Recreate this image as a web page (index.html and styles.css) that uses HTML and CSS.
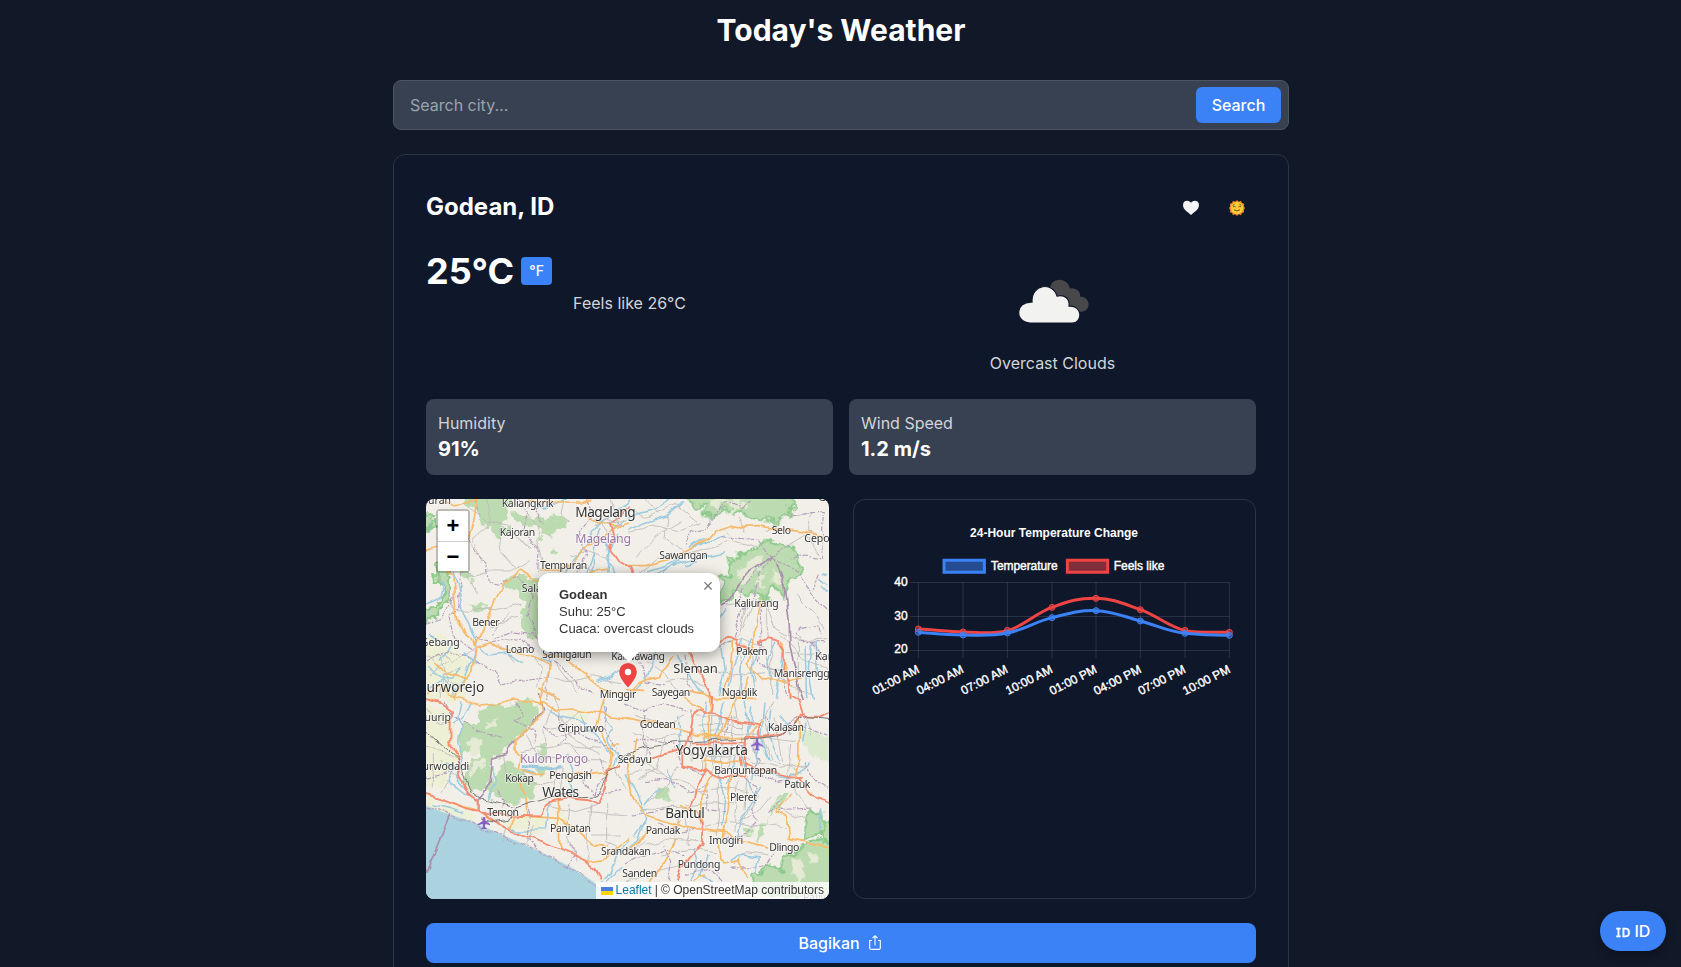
FILE: index.html
```html
<!DOCTYPE html>
<html lang="en">
<head>
<meta charset="utf-8">
<title>Today's Weather</title>
<link rel="stylesheet" href="styles.css">
</head>
<body>
<main class="page">
  <h1 class="title">Today's Weather</h1>
  <form class="search">
    <input class="search-input" type="text" placeholder="Search city...">
    <button class="search-btn" type="button">Search</button>
  </form>
  <section class="card">
    <header class="card-head">
      <h2 class="city">Godean, ID</h2>
      <div class="actions">
        <svg width="16" height="16" viewBox="0 0 16 16"><path d="M8 15C5 12 0 9.500 0 5.200C0 2 2 .8 4 .8C6 .8 7.500 1.800 8 3C8.500 1.800 10 .8 12 .8C14 .8 16 2 16 5.200C16 9.500 11 12 8 15Z" fill="#f4f2f4"/><path d="M9 3.500C11 1 14.500 2 14 5C13.500 7 10 7 9 3.500" fill="#fff"/></svg>
        <svg width="16" height="16" viewBox="0 0 16 16"><path d="M8 0l1.700 1.700 2.300-.9.900 2.300 2.400.7-.5 2.400L16 8l-1.200 1.900.4 2.300-2.300.7-.9 2.300-2.300-.9L8 16l-1.700-1.700-2.300.9-.9-2.300-2.300-.7.4-2.300L0 8l1.200-1.800-.4-2.400 2.300-.7L4 .8l2.300.9Z" fill="#f7842b"/><circle cx="8" cy="8" r="6.200" fill="#fccb35"/><path d="M3.700 5.300l1.800-1M12.300 5.300l-1.800-1M4 6.900q1.300-1 2.600 0M9.400 6.900q1.300-1 2.600 0M5 9.800q3 2.300 6 0" fill="none" stroke="#5d4523" stroke-width=".9"/></svg>
      </div>
    </header>
    <div class="now">
      <div class="now-col">
        <div class="temp-row"><span class="temp">25°C</span><button class="unit" type="button">°F</button></div>
        <p class="feels">Feels like 26°C</p>
      </div>
      <div class="now-col sky">
        <svg width="100" height="100" viewBox="0 0 100 100">
          <g transform="translate(0 1.500)">
          <path d="M47 38C46 25 64 23 67 36C73 35 78 39 77 44C84 44 87 50 85 55C83 59 79 60 75 59L55 44Z" fill="#48484a"/>
          <path d="M27 70C11 69 12 48 29 49C28 31 50 28 54 43C62 41 67 46 66 53C80 52 80 70 69 70Z" fill="#f2f2f0" stroke="#10182a" stroke-width="1.200" transform="translate(0 .6)"/>
          </g>
        </svg>
        <p class="desc">Overcast Clouds</p>
      </div>
    </div>
    <div class="stats">
      <div class="stat"><p class="stat-name">Humidity</p><p class="stat-value">91%</p></div>
      <div class="stat"><p class="stat-name">Wind Speed</p><p class="stat-value">1.2 m/s</p></div>
    </div>
    <div class="panels">
      <div class="map">
        <svg class="tiles" width="403" height="400" viewBox="0 0 403 400">
          <defs>
            <filter id="terrain" x="-5%" y="-5%" width="110%" height="110%"><feTurbulence type="fractalNoise" baseFrequency=".09" numOctaves="3" seed="4"/><feDisplacementMap in="SourceGraphic" scale="15" xChannelSelector="R" yChannelSelector="G"/></filter>
            <filter id="bends" x="-5%" y="-5%" width="110%" height="110%"><feTurbulence type="fractalNoise" baseFrequency=".05" numOctaves="2" seed="9"/><feDisplacementMap in="SourceGraphic" scale="9" xChannelSelector="R" yChannelSelector="G"/></filter>
          </defs>
          <rect width="403" height="400" fill="#f2efe9"/>
          <g filter="url(#terrain)">
          <g transform="translate(-6 -4) scale(.33333)">
            <path class="farm" d="M18 430L60 420 120 470 150 520 130 615H18Z"/>
            <path class="wood" d="M150 0H280L270 60 240 90 268 98 250 135 222 138 215 100 180 85 165 50 140 20ZM280 50L330 70 400 66 450 84 445 108 410 100 402 122 370 118 350 90 300 84 280 66ZM360 120l14 4 2 22-16-8ZM390 150l22 12-4 14-18-12ZM118 232l26-10 22 24-20 8-18-6ZM148 258l16-4-4 20ZM155 330l30-2 4 18-30 2ZM245 265L300 233 356 260 356 300 330 310 270 285ZM300 300L356 300V430L330 425 305 405 310 340Z"/>
            <path class="wood edge" d="M0 60L40 64 46 90 18 110H0ZM42 200L60 194 78 214 76 236 96 250 88 310 60 340 60 370 0 385V345L46 335 68 310 72 270 48 250Z"/>
          </g>
          <g transform="translate(199 -4) scale(.33333)">
            <path class="wood edge" d="M165 0L215 36 240 30 236 68 270 62 285 45 320 40 340 48 380 60 400 74 440 76 500 66V0Z"/>
            <path class="wood edge" d="M310 185L350 182 380 160 440 138 460 150 500 150 514 178 526 200 520 250 490 260 486 308 440 270 430 285 430 315 390 305 340 290 330 295 288 325V250L320 235Z"/>
            <path class="sparse" d="M330 260L370 200 420 175 395 220 360 260ZM390 270l30-50-3 55ZM445 230l20 15 10 20-30-5ZM320 20l30 5 20 15-50 5Z"/>
            <path class="sparse" d="M240 12L260 40 290 30 340 20 350 12Z"/>
          </g>
          <g transform="translate(-6 196) scale(.33333)">
            <path class="farm" d="M0 20L90 40 110 180 70 270 0 280ZM0 305L170 360 155 380 0 330ZM265 370L370 370 380 400 340 430 265 395ZM410 350L450 370 440 400 400 380ZM440 60L500 40 490 90Z"/>
            <path class="wood" d="M175 50L230 30 290 20 330 10 358 30 350 62 330 100 300 115 280 150 260 155 235 180 215 185 205 260 185 300 160 290 125 260 128 230 160 200 180 190 170 160 150 150 125 190 115 120 150 85 180 80ZM355 150h22v38h-22ZM240 210L260 200 300 215 345 270 340 300 300 315 270 325 230 300ZM200 265l30-10 20 50-35 5-20-15ZM350 215l30-5 10 20-25 10Z"/>
            <path class="sparse" d="M140 140L180 120 190 150 160 190 150 170ZM140 230l40-30 20 10-50 40ZM200 90l30-20 4 14-30 16Z"/>
          </g>
          <g transform="translate(199 196) scale(.33333)">
            <path class="wood" d="M95 275L130 285 135 315 95 312 85 290ZM350 405l20-5 6 14-20 4ZM470 300L490 300 460 340 430 360 410 430 395 450 390 420 420 380 440 340Z"/>
            <path class="sparse2" d="M520 90L570 110 640 130V210L570 190 530 150Z"/>
            <path class="wood edge" d="M545 355L590 350V420L545 425ZM530 450L590 430 640 445V600H400L380 545 420 530 440 510 470 530 470 490 510 480ZM590 380h50v60h-50Z"/>
            <path class="sparse" d="M500 490l35 15 5 50-30 10ZM550 470l20 10-10 30Z"/>
          </g>
          </g>
          <path class="water" transform="translate(-6 196) scale(.33333)" d="M0 326L90 358 150 378 260 425 350 465 450 515 520 560 560 600 630 615V630H0Z"/>
          <g filter="url(#bends)">
          <!-- north-west -->
          <g transform="translate(-6 -4) scale(.33333)">
            <path class="minor" d="M150 40L200 80 260 90 300 130 340 160M200 12L210 80 160 130 180 200M120 230L170 240 220 225 290 225 330 200M230 100L240 170 290 225M330 12L320 60 360 90 350 140 370 200M430 12L420 60 450 80M60 240L100 330 150 350 220 330M200 330L250 345 310 330M170 300L140 240M220 420L240 380 300 370M290 460L340 420 360 430M18 500L70 480 100 500 160 455M30 540L90 500M60 615L70 540 130 520M60 480L90 560 140 590M330 480L360 520 350 580M380 540L440 560 520 545 600 560M400 500L470 590M450 180L500 170 560 190M470 200L520 230M500 20L540 60 560 120 610 140M20 480L60 530M240 450L280 500M270 360L210 400"/>
            <path class="stream" d="M340 20L370 40 400 30 440 12M430 235L460 190 500 150 520 110 560 70 600 40 630 12M560 235L570 170 560 130M540 100L520 160 520 235M500 235L520 180M590 120L560 190 580 235M610 80L560 120M18 330L60 310 72 260M96 232L110 270 130 350 165 440 160 480 130 560 100 600M170 450L210 480 260 475 310 505M18 520L60 545 100 550 130 520M18 580L70 550 110 590M125 470L165 500M95 440L60 500M535 560L580 540 610 520M360 490L390 500 385 540M30 420L80 450"/>
            <path class="border" d="M145 130L175 185 200 205 208 262 240 268 290 245 340 300 320 360 356 430M125 235L110 300 120 330 90 360 105 430 165 470M18 395L60 375 100 300M290 12L320 60 310 110 360 170 356 230M380 12L350 45 370 80M165 430L220 440 300 430 350 460M165 500L220 530 240 570 300 560 385 545M400 500L430 520 470 570 520 600M500 12L520 60 480 120 500 180 460 235M18 500L80 470 150 485M160 12L180 60M230 430L270 410 345 420M390 470L380 615"/>
            <path class="second" d="M60 12L100 30 140 24 180 12M170 12L165 60 148 130M18 170L50 160M76 232L96 240 100 300 110 370 165 455 215 440 250 465 300 470 350 490 390 510 380 550 360 615M165 455L155 530 120 580 100 615M155 450L180 425 200 380 220 330 250 270 300 228 360 260M300 30L330 18 410 24 480 24 520 12M360 225L420 225 460 200 500 150 550 125 590 100 630 90M470 50L540 80 590 100M40 510L80 535 140 550M370 480L430 485 470 520 540 575 620 600M510 235L560 225M18 600L60 570 90 595M356 585L420 615"/>
            <path class="trunk" d="M630 30L600 60 570 90 580 130 570 155 600 200 630 218"/>
            <path class="minor" d="M540 40L590 60M550 70L610 100M560 90L620 80M570 12L590 90M530 90L590 50"/>
          </g>
          <!-- north-east -->
          <g transform="translate(199 -4) scale(.33333)">
            <path class="minor" d="M10 30L60 70 160 30 220 80M30 190L100 120 170 80M130 60L120 130 180 180M60 12L100 60M10 120L80 90 160 110 230 80M40 235L100 190 170 180 260 160 310 140M360 110L340 60M420 110L480 60 560 50 550 110 600 130M490 150L540 120 580 180M300 100L330 140 400 160M290 450L350 430 420 460M300 330L380 320 350 400M420 320L450 400 520 440 610 430M420 320L430 430M470 420L540 500 610 520M330 430L350 520 330 615M380 450L390 560M250 520L320 540 420 530M420 480L450 540 560 600M120 560L200 550 260 590M510 300L560 350 600 400M60 500L120 530 160 600M360 340L340 420 310 440M480 480L570 470M440 430V600M520 440V615"/>
            <path class="stream" d="M10 110L60 85 130 65 180 18M140 12L90 45 10 70M185 160L240 130M190 165L235 145M200 158L300 120M60 230L120 215 170 190M90 235L180 200 300 170M110 235L160 200M180 210L215 200M300 340L280 370M350 430L320 520 310 580M380 430L350 500 340 615M450 440L430 490 440 560M470 460L460 560 450 615M560 440L550 520 565 615M570 440L578 540M590 235l15 8M580 250l25 20M585 270l20 22M400 470L380 530 390 600M160 480L180 520 240 600M90 470L60 550 20 590M540 450L545 610M290 450L300 520 280 600"/>
            <path class="border" d="M380 18L350 40 300 20 270 70 240 100 200 110 180 150M500 60L560 50 595 50 590 190 540 180 500 190M290 125L400 135 440 190 480 210 520 240 560 300 610 345M440 190L400 250 380 320 350 350 320 440 290 450M440 190L500 150M430 190L360 270 340 330M580 235L560 290M530 395L510 420 530 440 600 440M400 320L410 450 400 500 470 530 490 600M530 400L580 390 590 420M180 480L190 560 220 600M40 480L60 560 120 570M560 440L600 500"/>
            <path class="purple" d="M285 330L320 310 360 240 440 190 460 215 480 270 492 370 495 460 530 600 535 615"/>
            <path class="second" d="M0 212L60 212 140 192 200 160 250 130 270 105 320 88 355 94 400 92 440 100 530 110 590 124M405 310L390 380 385 450 370 510 410 550 490 560 530 545M320 430L312 540 290 600M350 450L390 470M370 545L345 610M150 480L100 545 40 560 10 590M0 578L60 580M200 590L280 610 400 610M470 440L475 500 490 560"/>
            <path class="trunk" d="M0 212L15 215 24 240M190 470L230 540 255 585 260 615M290 440L305 425 335 435 332 470M332 450L375 460M405 455L405 440 432 430 462 438 465 460 474 470 472 520 497 560 500 615"/>
          </g>
          <!-- south-west -->
          <g transform="translate(-6 196) scale(.33333)">
            <path class="stream wide" d="M305 212L350 215 380 220 425 212M310 225L340 235"/>
            <path class="stream" d="M120 20L110 60 130 100 110 140 125 200 115 260 150 300 170 320M80 210L110 220 90 260 140 300M30 330L90 340 130 355M222 210L222 270 205 315M265 395L290 405 380 404 385 340 395 320M480 60L500 100 550 150 580 180M550 20L560 80 580 100 560 130 590 180 575 210M630 440L590 480 570 540 530 565M150 20L130 60 100 90M440 180L460 230 450 270 470 300M380 40L420 60 500 90M600 520L560 560"/>
            <path class="minor" d="M18 40L60 90 90 80M18 160L70 170 110 190M40 180V280M60 290L100 240M380 100L430 90 480 40M400 30L370 100 380 150M320 120L350 180 420 190M450 150L500 200 560 200M300 170L420 150 540 160M510 330L500 450 505 500M450 330L440 430 470 500M340 390L320 450M260 400L250 440M380 330L470 350 530 330M250 180L260 240 290 260M410 210L400 290M430 210L420 300M560 330L560 440 600 460M520 420L600 420M500 350L620 360M580 210L620 290M400 0L450 120 540 180M60 200L130 260M310 240L370 270 400 260"/>
            <path class="border" d="M70 20L90 60 130 80 200 120 240 130M290 20L310 60 280 80 350 110 345 150M370 90L410 120 470 110 520 140 580 160M420 60L440 130 410 150M540 195L560 240 530 270 520 310M320 320L330 370 320 430 350 465M440 515L460 480 440 440M18 250L60 240 100 230M510 220L490 260 520 300 600 290M230 290L250 320 240 340M18 334L90 360 150 380 260 428 350 468 450 518 530 570M560 40L550 100 590 160"/>
            <path class="purple" d="M90 357L18 530M355 0L368 45 330 105 280 140 260 178 218 190 210 265 190 300 174 318 172 345"/>
            <path class="second" d="M85 0L140 15 180 30 230 25 290 12 360 28 370 20 410 45 460 42 520 52 630 72M360 12L365 60 330 105 285 135 285 165 300 185 295 220 330 235 375 235M300 260L318 300 320 360M18 300L90 325 170 350M270 400L285 362 420 370 445 385 520 450 570 455M415 310L420 465M555 0L530 100 575 170 565 230 500 235 440 230M500 498L560 490 630 430M480 235L440 260M577 150L600 150"/>
            <path class="trunk" d="M18 12L60 25 90 45 88 150 115 190 122 250 145 300 172 320 174 350M0 292L80 320 150 348 174 350 230 385 290 412 420 465 500 498 525 520 542 550M174 350L200 360 362 364 372 335 400 315 440 308 500 315 532 330 555 280 562 220 600 212"/>
            <path class="rail" d="M0 90L112 190 150 290 180 312 285 338 380 310 430 295 490 308 530 305 545 280 565 225 590 210 610 180 630 176M180 372L225 382 265 376 285 340"/>
          </g>
          <!-- south-east -->
          <g transform="translate(199 196) scale(.33333)">
            <path class="minor" d="M200 40L195 200M210 60L340 70M215 90L350 95M220 110L410 115M260 60V200M290 60V230M320 60L310 220M350 80V220M200 180L380 190M230 140V230M270 130L260 240M390 90V170M240 190L370 150M410 120L440 200 530 230M420 60L430 130 510 140M450 60L470 200M380 200L460 220 540 210M30 60L110 90 180 60M20 110L90 130 170 120M60 130L60 200 120 240M120 130L100 220 40 260M160 210L130 270 60 330M0 240L80 230 180 260 240 300M180 330L270 320 330 330M180 290L300 280 370 290M240 400L320 380 400 400M280 240V460M340 260L330 410M370 240L360 340M400 300L350 380M440 300L400 350 340 380M60 340L110 340 220 340M160 350L150 450M180 370L190 450M60 450L140 430 220 440M20 480L60 440M0 560L90 530 200 510M110 480L190 460 270 470M250 500L280 540M330 510L360 470 430 480M500 270L550 350M460 340L510 370 545 365M380 400L450 390 480 400M330 20L340 80M440 20L420 70 400 80M500 150L490 250M540 60L560 120"/>
            <path class="stream" d="M60 330L90 290 110 280M70 340L45 345M0 240L40 300 65 370 40 440 0 480M300 20L280 100 270 200M240 20L230 80 240 150M360 20L370 100 350 180 360 240M380 40L370 130M420 20L410 130 430 200M440 40L430 120 460 200M280 240L300 300 290 400M370 250L390 300 350 370 340 420 300 440M320 500L350 480 400 485 390 540M590 340L580 400M200 460L220 520 200 560M130 220L150 280M410 270L380 320M160 60L170 180M540 80L530 140M470 60L490 120M250 480L230 540 260 560M400 120L400 200 385 250M60 380L30 430M330 190L310 270M430 240L490 250 560 200"/>
            <path class="border" d="M0 30L60 50 120 30 190 50M20 140L80 130 150 150 170 210 240 240M60 260L130 250 190 290 240 270 250 340 300 350M360 250L400 270 380 340 400 380 360 420 300 430M390 160L410 200 380 230 450 260 500 250M20 360L80 350 150 340M100 380L160 420 230 400M0 510L60 480 130 460 180 480M180 540L250 520 290 560M520 90L610 120M540 200L580 260 610 280M430 350L470 310M460 350L560 345M60 60L50 140 80 190M310 70L300 130 370 170M130 560L140 500 120 450M320 520L420 510 450 480M420 60L450 100 520 70"/>
            <path class="second" d="M0 68L90 85 200 115 280 128M255 0L252 60 255 160M340 0L300 90 280 140M230 128H420M240 190L238 235M235 195L370 208M410 80L365 130M30 130L10 240 20 300 65 360 110 375 180 400 300 415 350 440 430 460M0 480L40 450 75 400M160 430L120 500 75 560M260 245L230 300 232 400M320 245L310 340 295 430M280 440L285 490 300 510 340 500 370 550M165 335L220 345M520 70L518 210 510 245M500 290L490 310 450 350 485 365 490 430 540 440 612 455M140 400L165 380M170 0L240 50M240 540L210 560"/>
            <path class="trunk" d="M80 187L170 165M262 0L258 50M215 40L300 68 310 75 405 88 406 126H360V145H200M215 40L200 70 190 130 172 175 172 212 240 225 265 245 340 248 360 245 360 128M240 225L215 265 195 335M220 345L232 400 230 445 190 490 165 530 155 562M360 205L420 230 500 248 530 245 520 255 560 300 640 330M500 0L525 15 540 60 470 115 400 128M540 65L580 65 640 30M345 190V215"/>
            <path class="rail" d="M0 175L60 155 160 142 300 135 400 130 460 122 510 85 545 65 640 72"/>
          </g>
          </g>
          <path transform="translate(-6 196) scale(.33333)" d="M192 366c4 0 4 5 4 12l14 9v4l-14-4-1 9 5 4v2h-16v-2l5-4-1-9-14 4v-4l14-9c0-7 0-12 4-12Z" fill="#8461c4"/>
          <path transform="translate(199 196) scale(.33333)" d="M396 130c4 0 4 5 4 12l14 9v4l-14-4-1 9 5 4v2h-16v-2l5-4-1-9-14 4v-4l14-9c0-7 0-12 4-12Z" fill="#8461c4"/>
          <g class="label" transform="translate(-6 -4) scale(.33333)">
            <text x="93" y="28" text-anchor="end">Bruran</text><text x="245" y="35" textLength="156">Kaliangkrik</text><text x="239" y="122" textLength="107">Kajoran</text><text x="360" y="221" textLength="142">Tempuran</text><text x="305" y="290">Salaman</text><text x="157" y="393" textLength="82">Bener</text><text x="119" y="452" text-anchor="end">Gebang</text><text x="257" y="475" textLength="86">Loano</text><text x="367" y="488" textLength="148">Samigaluh</text><text x="574" y="496" textLength="161">Kaliwawang</text><text x="539" y="610" textLength="110">Minggir</text>
            <g class="town"><text x="466" y="65" textLength="181">Magelang</text><text class="region" x="466" y="145" textLength="167">Magelang</text><text x="193" y="590" text-anchor="end">Purworejo</text></g>
          </g>
          <g class="label" transform="translate(199 -4) scale(.33333)">
            <text x="103" y="192" textLength="145">Sawangan</text><text x="440" y="116" textLength="58">Selo</text><text x="538" y="142">Cepogo</text><text x="580" y="18">Gladagsari</text><text x="328" y="335" textLength="133">Kaliurang</text><text x="334" y="481" textLength="94">Pakem</text><text x="571" y="495">Karang</text><text x="446" y="545" textLength="168">Manisrengg</text><text x="80" y="602" textLength="116">Sayegan</text><text x="290" y="603" textLength="107">Ngaglik</text>
            <text class="big" x="145" y="535" textLength="133">Sleman</text>
          </g>
          <g class="label" transform="translate(-6 196) scale(.33333)">
            <text x="93" y="78" text-anchor="end">Ngruurip</text><text x="148" y="224" text-anchor="end">Purwodadi</text><text x="413" y="111" textLength="139">Giripurwo</text><text x="256" y="262" textLength="86">Kokap</text><text x="388" y="252" textLength="128">Pengasih</text><text x="202" y="364" textLength="95">Temon</text><text x="390" y="410" textLength="123">Panjatan</text><text x="543" y="480" textLength="149">Srandakan</text><text x="607" y="545" textLength="105">Sanden</text><text x="593" y="204" textLength="103">Sedayu</text>
            <g class="town"><text class="region" x="300" y="203" textLength="205">Kulon Progo</text><text x="367" y="305" textLength="110">Wates</text></g>
          </g>
          <g class="label" transform="translate(199 196) scale(.33333)">
            <text x="44" y="100" textLength="108">Godean</text><text x="429" y="107" textLength="108">Kalasan</text><text x="268" y="238" textLength="189">Banguntapan</text><text x="478" y="280" textLength="78">Patuk</text><text x="315" y="319" textLength="81">Pleret</text><text x="62" y="416" textLength="104">Pandak</text><text x="252" y="446" textLength="103">Imogiri</text><text x="433" y="469" textLength="90">Dlingo</text><text x="158" y="518" textLength="128">Pundong</text><text x="534" y="617">Paliyan</text>
            <g class="town"><text x="152" y="180" textLength="217">Yogyakarta</text><text x="121" y="370" textLength="118">Bantul</text></g>
          </g>
        </svg>
        <svg class="pin" width="18" height="25" viewBox="0 0 18 25"><path d="M9 0a8.800 8.800 0 0 0-8.800 8.800C.2 15 6 21 9 24.500C12 21 17.800 15 17.800 8.800A8.800 8.800 0 0 0 9 0Z" fill="#ee4444"/><circle cx="9" cy="9" r="3.200" fill="#fff"/></svg>
        <div class="popup"><b>Godean</b><br>Suhu: 25°C<br>Cuaca: overcast clouds<span class="close">×</span></div>
        <div class="zoom"><span>+</span><span>−</span></div>
        <div class="credit"><svg width="12" height="8" viewBox="0 0 12 8"><path fill="#4c7be1" d="M0 0h12v4H0z"/><path fill="#ffd500" d="M0 4h12v4H0z"/></svg> <span class="link">Leaflet</span> | © OpenStreetMap contributors</div>
      </div>
      <div class="chart">
        <svg width="401" height="398" viewBox="0 0 401 398">
          <g transform="translate(-9.300 -10) scale(.33333)">
            <text class="chart-title" x="376" y="141" textLength="504">24-Hour Temperature Change</text>
            <path d="M298 211H419V247H298Z" fill="#254b91" stroke="#3b82f6" stroke-width="9"/>
            <path d="M668 211H789V247H668Z" fill="#7f2e3a" stroke="#ef4444" stroke-width="9"/>
            <g class="chart-text"><text x="439" y="240" textLength="200">Temperature</text><text x="807" y="240" textLength="152">Feels like</text>
            <text x="189" y="288" text-anchor="end">40</text><text x="189" y="390" text-anchor="end">30</text><text x="189" y="488" text-anchor="end">20</text>
            <text text-anchor="end" transform="translate(226 546) rotate(-27)">01:00 AM</text><text text-anchor="end" transform="translate(359 546) rotate(-27)">04:00 AM</text><text text-anchor="end" transform="translate(492 546) rotate(-27)">07:00 AM</text><text text-anchor="end" transform="translate(626 546) rotate(-27)">10:00 AM</text><text text-anchor="end" transform="translate(759 546) rotate(-27)">01:00 PM</text><text text-anchor="end" transform="translate(892 546) rotate(-27)">04:00 PM</text><text text-anchor="end" transform="translate(1025 546) rotate(-27)">07:00 PM</text><text text-anchor="end" transform="translate(1159 546) rotate(-27)">10:00 PM</text></g>
            <path d="M197 277.500H1155M197 379.500H1155M197 481.500H1155M221 277V504M355 277V504M488 277V504M622 277V504M754 277V504M887 277V504M1021 277V504M1154 277V504" stroke="#fff" stroke-opacity=".12" stroke-width="3" fill="none"/>
            <g fill="#ef4444" fill-opacity=".5" stroke="#ef4444" stroke-width="3"><path d="M221 417C274 419 302 425 355 426C408 427 435 434 488 422C541 407 569 371 622 352C675 333 701 324 754 325C807 326 834 340 887 359C940 378 968 408 1021 422C1074 430 1101 426 1154 427" fill="none" stroke-width="9"/><circle cx="221" cy="417" r="9"/><circle cx="355" cy="426" r="9"/><circle cx="488" cy="421" r="9"/><circle cx="622" cy="352" r="9"/><circle cx="754" cy="325" r="9"/><circle cx="887" cy="359" r="9"/><circle cx="1021" cy="421" r="9"/><circle cx="1154" cy="427" r="9"/></g>
            <g fill="#3b82f6" fill-opacity=".5" stroke="#3b82f6" stroke-width="3"><path d="M221 427C265 430 302 435 355 435C408 435 435 439 488 429C541 419 569 396 622 383C675 370 701 360 754 362C807 364 834 379 887 393C940 407 968 424 1021 430C1074 436 1101 434 1154 436" fill="none" stroke-width="9"/><circle cx="221" cy="427" r="9"/><circle cx="355" cy="435" r="9"/><circle cx="488" cy="429" r="9"/><circle cx="622" cy="383" r="9"/><circle cx="754" cy="362" r="9"/><circle cx="887" cy="393" r="9"/><circle cx="1021" cy="430" r="9"/><circle cx="1154" cy="436" r="9"/></g>
          </g>
        </svg>
      </div>
    </div>
    <button class="share" type="button">Bagikan <svg width="12" height="16" viewBox="0 0 12 16" fill="none" stroke="#fff" stroke-width="1.100"><path d="M3 5.500H.7V13q0 1.400 1.400 1.400h7.800q1.400 0 1.400-1.400V5.500H9M6 10.500V1M3.500 3.200L6 .8l2.500 2.400"/></svg></button>
  </section>
</main>
<button class="lang" type="button"><span class="flag">ɪᴅ</span> ID</button>
</body>
</html>
```
FILE: styles.css
```css
* { box-sizing: border-box; margin: 0; padding: 0; }
html, body { height: 100%; overflow: hidden; }
body { background: #111827; color: #fff; font: 16px/24px Inter, sans-serif; }
button { border: 0; background: #3b82f6; color: #fff; font: 500 16px/24px Inter, sans-serif; }
svg { display: block; flex: none; }
.page { width: 897px; height: 100%; overflow: hidden; margin: 0 auto; padding: 12px 0 0 1px; }
.title { font-size: 30px; line-height: 36px; font-weight: 700; text-align: center; margin-bottom: 32px; }
.search { display: flex; align-items: center; height: 50px; padding: 0 7px 0 16px; background: #374151; border: 1px solid #4b5563; border-radius: 8px; margin-bottom: 24px; }
.search-input { flex: 1; background: none; border: 0; color: #fff; font: 16px/24px Inter, sans-serif; }
.search-input::placeholder { color: #9ca3af; }
.search-btn { width: 85px; height: 36px; border-radius: 6px; }
.card { height: 900px; padding: 32px; background: #0f172a; border: 1px solid #2a3444; border-radius: 12px; }
.card-head { display: flex; align-items: center; justify-content: space-between; height: 40px; margin-bottom: 24px; }
.city { font-size: 24px; line-height: 32px; font-weight: 700; }
.actions { display: flex; gap: 30px; padding: 2px 11px 0 0; }
.now { display: grid; grid-template-columns: 1fr 1fr; gap: 16px; height: 124px; margin-bottom: 24px; }
.temp-row { display: flex; align-items: center; gap: 7px; height: 40px; }
.temp { font-size: 36px; line-height: 40px; font-weight: 700; }
.unit { width: 31px; height: 28px; border-radius: 4px; font-size: 14px; line-height: 20px; }
.feels, .desc { text-align: center; color: #d1d5db; }
.sky { display: flex; flex-direction: column; align-items: center; }
.stats { display: grid; grid-template-columns: 1fr 1fr; gap: 16px; margin-bottom: 24px; }
.stat { height: 76px; padding: 12px; border-radius: 8px; background: #374151; }
.stat-name { color: #d1d5db; }
.stat-value { font-size: 20px; line-height: 28px; font-weight: 700; }
.panels { display: grid; grid-template-columns: 1fr 1fr; gap: 24px; margin-bottom: 24px; }
.map { position: relative; height: 400px; border-radius: 8px; overflow: hidden; color: #333; font-family: "Liberation Sans", sans-serif; }
.chart { height: 400px; border: 1px solid #2a3444; border-radius: 12px; }
.tiles path { stroke-linejoin: round; }
.farm { fill: #eef0d6; }
.water { fill: #aad3df; }
.wood { fill: #bcdbb0; }
.edge { stroke: #8dca8c; stroke-width: 7; }
.sparse { fill: #e4ead4; }
.sparse2 { fill: #dcebcf; }
.minor, .stream, .border, .purple, .second, .trunk, .rail { fill: none; }
.minor { stroke: #bdbcb9; stroke-width: 2.6; }
.stream { stroke: #9ccbe0; stroke-width: 4.5; }
.wide { stroke-width: 10; }
.border { stroke: #b49dbb; stroke-width: 3.4; stroke-dasharray: 15 4 5 4; }
.purple { stroke: #aa8eae; stroke-width: 5; }
.second { stroke: #f8ba69; stroke-width: 5; }
.trunk { stroke: #f58b70; stroke-width: 5.5; }
.rail { stroke: #777; stroke-width: 3; }
.label { font: 31.5px "Noto Sans", sans-serif; fill: #333; stroke: #fff; stroke-opacity: .65; stroke-width: 5; paint-order: stroke; }
.town { font-size: 41px; }
.big { font-size: 39px; }
.region { fill: #9b76a4; font-size: 37px; }
.pin { position: absolute; left: 193px; top: 164px; }
.popup { position: absolute; left: 112px; top: 74px; width: 182px; height: 79px; padding: 13px 21px; border-radius: 12px; background: #fff; font-size: 13px; line-height: 17px; box-shadow: 0 3px 14px rgba(0, 0, 0, .4); white-space: nowrap; }
.popup::after { content: ""; position: absolute; left: 81px; top: 79px; border: 10px solid transparent; border-top-color: #fff; border-bottom: 0; }
.close { position: absolute; top: 1px; right: 0; width: 24px; line-height: 24px; text-align: center; font-size: 18px; color: #757575; }
.zoom { position: absolute; left: 10px; top: 10px; border: 2px solid rgba(0, 0, 0, .22); border-radius: 4px; background-clip: padding-box; color: #000; }
.zoom span { display: block; width: 30px; height: 29px; background: #fff; text-align: center; font: bold 22px/30px "Liberation Sans", sans-serif; }
.zoom span:first-child { height: 31px; border-bottom: 1px solid #ccc; }
.credit { position: absolute; right: 0; bottom: 0; display: flex; align-items: center; gap: 3px; height: 17px; padding: 0 5px; background: rgba(255, 255, 255, .8); font-size: 12px; line-height: 17px; white-space: nowrap; }
.link { color: #0078a8; }
.chart-title, .chart-text { fill: #fff; font: bold 36px "Liberation Sans", sans-serif; }
.chart-text { font-weight: 400; stroke: #fff; stroke-width: 1.2; }
.share { display: flex; align-items: center; justify-content: center; gap: 9px; width: 100%; height: 40px; padding-right: 3px; border-radius: 8px; }
.lang { position: absolute; left: 1600px; top: 911px; width: 66px; height: 40px; border-radius: 20px; box-shadow: 0 4px 10px rgba(0, 0, 0, .25); font-size: 16px; white-space: nowrap; }
.flag { font-family: "DejaVu Sans", sans-serif; font-size: 15px; -webkit-text-stroke: .3px #fff; }
```
